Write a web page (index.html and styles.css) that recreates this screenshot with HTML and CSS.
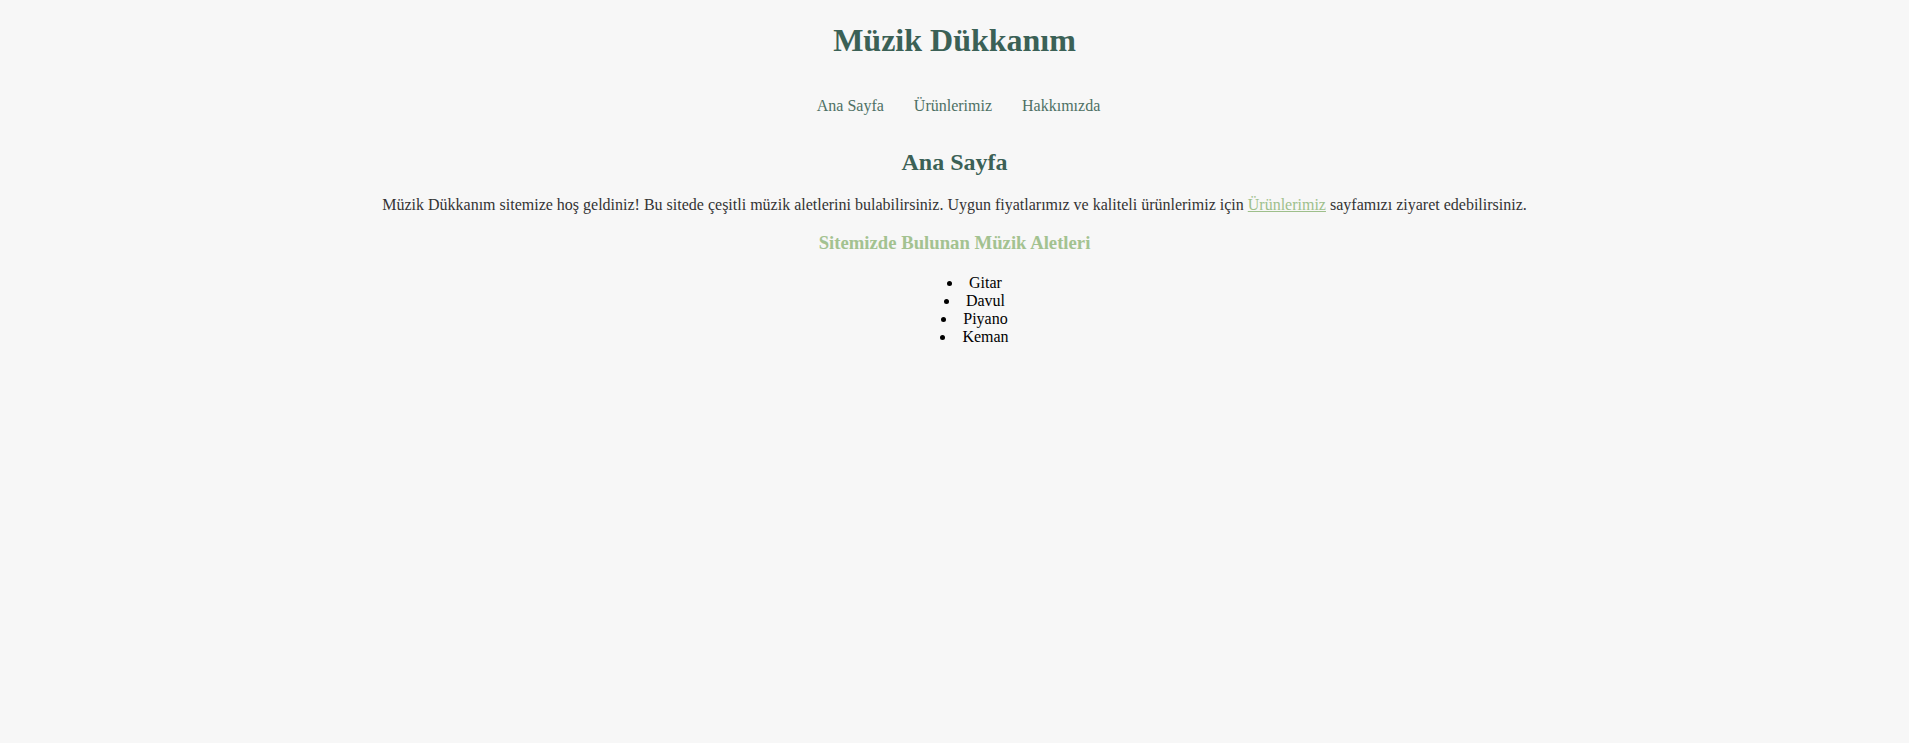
FILE: index.html
```html
<!DOCTYPE html>
<html lang="tr">
<head>
<meta charset="utf-8">
<title>Müzik Dükkanım</title>
<link rel="stylesheet" href="styles.css">
</head>
<body>
<header class="site-header">
  <h1 class="site-title">Müzik Dükkanım</h1>
  <nav class="site-nav">
    <ul class="nav-list">
      <li class="nav-item"><a class="nav-link" href="#">Ana Sayfa</a></li>
      <li class="nav-item"><a class="nav-link" href="#">Ürünlerimiz</a></li>
      <li class="nav-item"><a class="nav-link" href="#">Hakkımızda</a></li>
    </ul>
  </nav>
</header>
<main class="content">
  <h2 class="page-title">Ana Sayfa</h2>
  <p class="intro">Müzik Dükkanım sitemize hoş geldiniz! Bu sitede çeşitli müzik aletlerini bulabilirsiniz. Uygun fiyatlarımız ve kaliteli ürünlerimiz için <a class="inline-link" href="#">Ürünlerimiz</a> sayfamızı ziyaret edebilirsiniz.</p>
  <h3 class="section-title">Sitemizde Bulunan Müzik Aletleri</h3>
  <ul class="instrument-list">
    <li>Gitar</li>
    <li>Davul</li>
    <li>Piyano</li>
    <li>Keman</li>
  </ul>
</main>
</body>
</html>
```
FILE: styles.css
```css
body {
  margin: 8px;
  background: #f7f7f7;
  font-family: "Liberation Serif", "Times New Roman", serif;
  font-size: 16px;
  color: #333;
  text-align: center;
}
.site-title {
  color: #3b6156;
  font-size: 32px;
  margin: 14px 0 0;
}
.site-nav {
  margin: 0;
}
.nav-list {
  list-style: none;
  padding: 0 0 0 8px;
  margin: 38px 0 0;
  display: flex;
  justify-content: center;
  gap: 30px;
}
.nav-link {
  color: #4d7064;
  text-decoration: none;
}
.page-title {
  color: #3b6156;
  font-size: 24px;
  margin: 34px 0 0;
}
.intro {
  margin: 20px 0 16px;
}
.inline-link {
  color: #9ebf8b;
}
.section-title {
  color: #a3c290;
  font-size: 18.72px;
  margin: 18px 0 20px;
}
.instrument-list {
  color: #000;
  margin: 0;
  padding: 0 0 0 40px;
  list-style-position: inside;
}
```
